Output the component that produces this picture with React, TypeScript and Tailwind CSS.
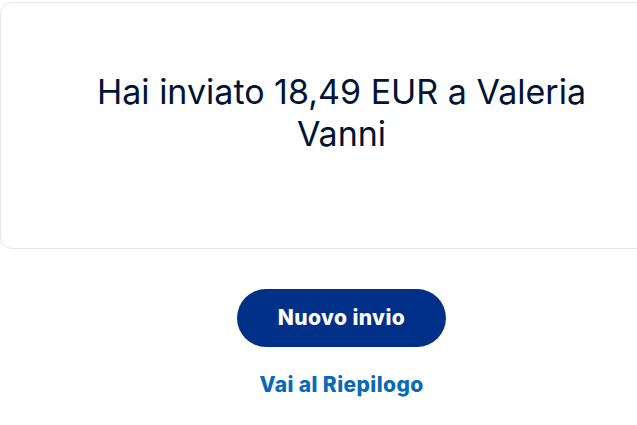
import React from 'react'

export default function App() {
  return (
    <div className="min-h-[425px] bg-white overflow-hidden" style={{ fontFamily: 'Inter, "Liberation Sans", Arial, sans-serif' }}>
      <div className="w-[683px] pt-[2px]">
        <div className="h-[247px] rounded-xl border border-[#e6e6e6] flex items-center justify-center px-[90px]">
          <h1 className="text-[34px] leading-[42px] text-[#001435] text-center -mt-[26px]">
            Hai inviato 18,49 EUR a Valeria Vanni
          </h1>
        </div>
        <div className="flex flex-col items-center mt-[40px]">
          <button className="h-[58px] w-[209px] rounded-full bg-[#003087] text-white font-extrabold text-[21px] tracking-[0.4px]">
            Nuovo invio
          </button>
          <a href="#" className="mt-[22px] text-[#0a6ab5] font-extrabold text-[21px] tracking-[0.4px]">
            Vai al Riepilogo
          </a>
        </div>
      </div>
    </div>
  )
}
